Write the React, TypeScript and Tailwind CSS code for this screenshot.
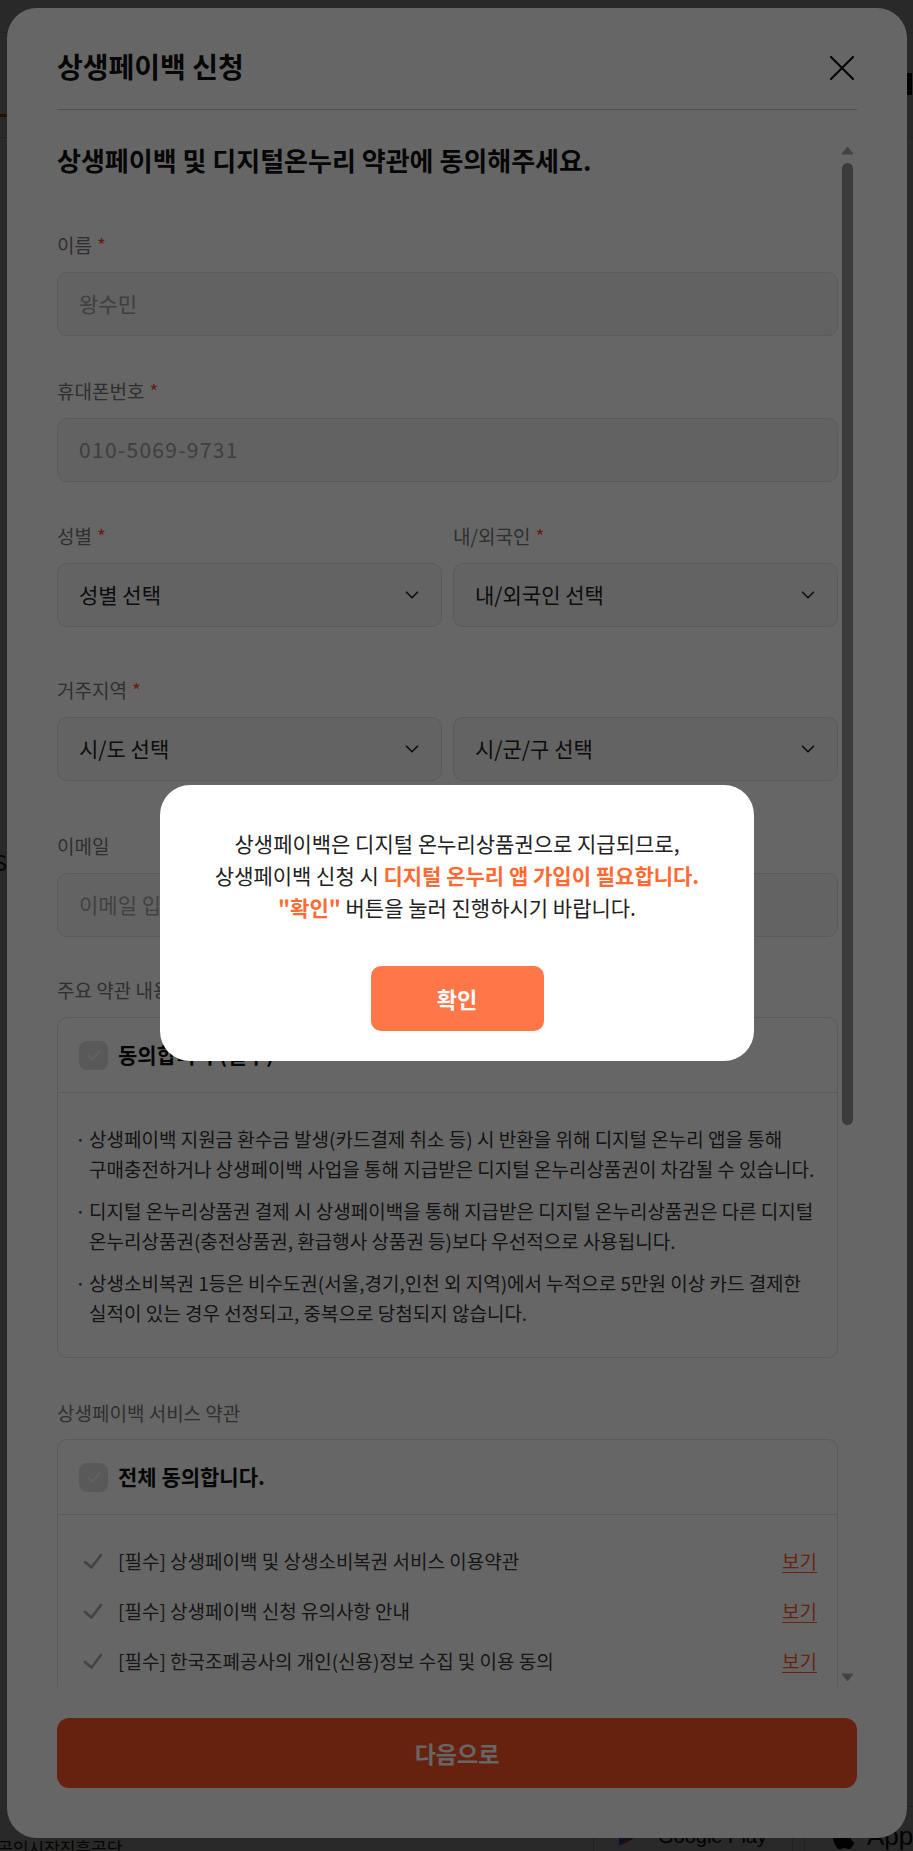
import React from "react";

/* ---------- small pieces ---------- */

function FieldLabel({ children, required }: { children: React.ReactNode; required?: boolean }) {
  return (
    <div className="text-[19px] leading-[26px] text-[#767676]">
      {children}
      {required && <span className="ml-[5px] text-[#ff4e1b]">*</span>}
    </div>
  );
}

function TextBox({ value, muted, className = "" }: { value: string; muted?: boolean; className?: string }) {
  return (
    <div
      className={`flex h-[64px] items-center rounded-[10px] border border-[#e1e1e1] pl-[21px] text-[21px] ${
        muted ? "bg-[#f4f4f4] text-[#9d9d9d]" : "bg-[#f8f8f8] text-[#a3a3a3]"
      } ${className}`}
    >
      {value}
    </div>
  );
}

function SelectBox({ placeholder }: { placeholder: string }) {
  return (
    <div className="flex h-[64px] items-center justify-between rounded-[10px] border border-[#e1e1e1] bg-[#f8f8f8] pl-[21px] pr-[18px] text-[21px] text-[#222]">
      <span>{placeholder}</span>
      <svg width="22" height="22" viewBox="0 0 24 24" fill="none" stroke="#222" strokeWidth="1.8" strokeLinecap="round" strokeLinejoin="round">
        <path d="m6 9 6 6 6-6" />
      </svg>
    </div>
  );
}

function CheckBox() {
  return (
    <span className="flex h-[29px] w-[29px] items-center justify-center rounded-[8px] bg-[#dedede]">
      <svg width="18" height="18" viewBox="0 0 18 18" fill="none" stroke="#efefef" strokeWidth="2" strokeLinecap="round" strokeLinejoin="round">
        <path d="M3.5 9.5 7.5 13.5 14.5 5" />
      </svg>
    </span>
  );
}

function TermRow({ text }: { text: string }) {
  return (
    <div className="flex h-[50px] items-center pl-[25px] pr-[20px]">
      <svg width="20" height="20" viewBox="0 0 20 20" fill="none" stroke="#a8a8a8" strokeWidth="2.6" strokeLinecap="round" strokeLinejoin="round">
        <path d="M2 11 8.5 16.5 18 4" />
      </svg>
      <span className="ml-[15px] flex-1 text-[19px] text-[#3a3a3a] whitespace-nowrap">{text}</span>
      <a className="text-[19px] text-[#ff5a26] underline underline-offset-[3px]">보기</a>
    </div>
  );
}

function ScrollTrack() {
  return (
    <div className="ml-[2px] flex w-[15px] shrink-0 flex-col items-center pt-[6px] pb-[5px]">
      <svg width="13" height="9" viewBox="0 0 13 9">
        <path d="M6.5 1 12 8H1Z" fill="#a9a9a9" stroke="#a9a9a9" strokeLinejoin="round" />
      </svg>
      <div className="mt-[8px] h-[962px] w-[11px] rounded-full bg-[#939393]" />
      <div className="flex-1" />
      <svg width="13" height="9" viewBox="0 0 13 9">
        <path d="M1 1H12L6.5 8Z" fill="#a9a9a9" stroke="#a9a9a9" strokeLinejoin="round" />
      </svg>
    </div>
  );
}

const notices: React.ReactNode[] = [
  <>
    상생페이백 지원금 환수금 발생(카드결제 취소 등) 시 반환을 위해 디지털 온누리 앱을 통해
    <br />
    구매충전하거나 상생페이백 사업을 통해 지급받은 디지털 온누리상품권이 차감될 수 있습니다.
  </>,
  <>
    디지털 온누리상품권 결제 시 상생페이백을 통해 지급받은 디지털 온누리상품권은 다른 디지털
    <br />
    온누리상품권(충전상품권, 환급행사 상품권 등)보다 우선적으로 사용됩니다.
  </>,
  <>
    상생소비복권 1등은 비수도권(서울,경기,인천 외 지역)에서 누적으로 5만원 이상 카드 결제한
    <br />
    실적이 있는 경우 선정되고, 중복으로 당첨되지 않습니다.
  </>,
];

const serviceTerms = [
  "[필수] 상생페이백 및 상생소비복권 서비스 이용약관",
  "[필수] 상생페이백 신청 유의사항 안내",
  "[필수] 한국조폐공사의 개인(신용)정보 수집 및 이용 동의",
  "[필수] 개인(신용)정보 제3자 제공 동의",
  "[선택] 마케팅 정보 수신 동의",
];

/* ---------- page ---------- */

export default function App() {
  return (
    <div className="relative h-[1851px] w-full overflow-hidden bg-white font-['Noto_Sans_CJK_KR','Noto_Sans',sans-serif]">
      {/* page underneath the dialogs */}
      <div className="flex h-full flex-col">
        <div className="h-[33px] border-b border-[#dcdcdc]" />
        <div className="flex h-[105px] justify-between border-b border-[#dcdcdc]">
          <div className="mt-[40px] h-[44px] w-[60px] border-b-[3px] border-[#ff4f1f]" />
          <div className="mt-[40px] mr-[1px] h-[22px] w-[5px] bg-[#111]" />
        </div>
        <div className="mt-[708px] -ml-[6px] text-[22px] leading-[30px] text-[#222] whitespace-nowrap">Store</div>
        <div className="mt-auto flex h-[45px] items-start">
          <span className="-ml-[34px] mt-[32px] text-[17px] leading-[20px] text-[#222] whitespace-nowrap">소상공인시장진흥공단</span>
          <div className="ml-auto -mr-[91px] flex gap-[11px]">
            <div className="flex h-[60px] w-[200px] items-center gap-[20px] border border-[#ccc] pl-[24px]">
              <svg width="20" height="22" viewBox="0 0 20 22">
                <path d="M1 1 12 11 1 21Z" fill="#2b7de9" />
                <path d="M1 21 12 11 15 14Z" fill="#e63b3b" />
              </svg>
              <span className="font-['Liberation_Sans',sans-serif] text-[20px] text-[#111]">Google Play</span>
            </div>
            <div className="flex h-[60px] w-[200px] items-center gap-[12px] border border-[#ccc] pl-[26px]">
              <svg width="24" height="28" viewBox="0 0 24 28" fill="#111">
                <path d="M19.6 14.9c0-3.3 2.7-4.9 2.8-5-1.5-2.2-3.900-2.500-4.700-2.600-2-.2-3.9 1.2-4.9 1.2s-2.6-1.2-4.3-1.1C6.3 7.4 4.2 8.7 3.1 10.7c-2.3 4-.6 10 1.7 13.2 1.1 1.6 2.4 3.4 4.1 3.300 1.700-.1 2.300-1.100 4.300-1.100s2.600 1.100 4.300 1c1.800 0 2.900-1.600 4-3.200 1.300-1.800 1.800-3.600 1.800-3.700 0 0-3.700-1.400-3.700-5.300ZM16.400 5.300c.9-1.100 1.500-2.600 1.300-4.100-1.300.1-2.900.9-3.800 2-.8.9-1.600 2.500-1.400 3.900 1.500.1 2.900-.7 3.900-1.800Z" />
              </svg>
              <span className="font-['Liberation_Sans',sans-serif] text-[26px] text-[#111]">App Store</span>
            </div>
          </div>
        </div>
      </div>

      {/* backdrop of the apply modal */}
      <div className="absolute inset-0 bg-black/60" />

      {/* apply modal */}
      <div className="absolute left-[7px] top-[8px] flex h-[1830px] w-[900px] flex-col rounded-[30px] bg-white px-[50px] pb-[50px]">
        <div className="flex items-center justify-between border-b border-[#c8c8c8] pt-[40px] pb-[25px]">
          <h1 className="text-[28px] leading-[36px] font-bold text-[#111]">상생페이백 신청</h1>
          <button className="mt-[4px] mr-[3px]">
            <svg width="24" height="24" viewBox="0 0 24 24" stroke="#111" strokeWidth="2.2" strokeLinecap="round">
              <path d="M1 1 23 23M23 1 1 23" />
            </svg>
          </button>
        </div>

        <div className="mt-[30px] flex min-h-0 flex-1">
          <div className="w-[781px] shrink-0 overflow-hidden">
            <h2 className="text-[26px] leading-[40px] font-bold text-[#111]">상생페이백 및 디지털온누리 약관에 동의해주세요.</h2>

            <div className="mt-[52px]">
              <FieldLabel required>이름</FieldLabel>
              <div className="mt-[14px]">
                <TextBox value="왕수민" muted />
              </div>
            </div>

            <div className="mt-[42px]">
              <FieldLabel required>휴대폰번호</FieldLabel>
              <div className="mt-[14px]">
                <TextBox value="010-5069-9731" muted className="tracking-[1.3px]" />
              </div>
            </div>

            <div className="mt-[41px] grid grid-cols-2 gap-x-[11px]">
              <FieldLabel required>성별</FieldLabel>
              <FieldLabel required>내/외국인</FieldLabel>
              <div className="mt-[14px]">
                <SelectBox placeholder="성별 선택" />
              </div>
              <div className="mt-[14px]">
                <SelectBox placeholder="내/외국인 선택" />
              </div>
            </div>

            <div className="mt-[50px]">
              <FieldLabel required>거주지역</FieldLabel>
              <div className="mt-[14px] grid grid-cols-2 gap-x-[11px]">
                <SelectBox placeholder="시/도 선택" />
                <SelectBox placeholder="시/군/구 선택" />
              </div>
            </div>

            <div className="mt-[52px]">
              <FieldLabel>이메일</FieldLabel>
              <div className="mt-[14px]">
                <TextBox value="이메일 입력" />
              </div>
            </div>

            <div className="mt-[40px]">
              <FieldLabel>주요 약관 내용</FieldLabel>
              <div className="mt-[14px] rounded-[10px] border border-[#e1e1e1]">
                <div className="flex h-[75px] items-center gap-[10px] border-b border-[#e1e1e1] pl-[21px]">
                  <CheckBox />
                  <span className="text-[21px] font-bold text-[#111]">동의합니다 (필수)</span>
                </div>
                <ul className="flex flex-col gap-[12px] pt-[31px] pb-[29px] pl-[21px] pr-[8px]">
                  {notices.map((n, i) => (
                    <li key={i} className="flex text-[19px] leading-[30px] text-[#333] whitespace-nowrap">
                      <span className="-ml-[4px] w-[14px] shrink-0">·</span>
                      <span>{n}</span>
                    </li>
                  ))}
                </ul>
              </div>
            </div>

            <div className="mt-[42px]">
              <FieldLabel>상생페이백 서비스 약관</FieldLabel>
              <div className="mt-[13px] rounded-[10px] border border-[#e1e1e1]">
                <div className="flex h-[75px] items-center gap-[10px] border-b border-[#e1e1e1] pl-[21px]">
                  <CheckBox />
                  <span className="text-[21px] font-bold text-[#111]">전체 동의합니다.</span>
                </div>
                <div className="pt-[21px] pb-[20px]">
                  {serviceTerms.map((t) => (
                    <TermRow key={t} text={t} />
                  ))}
                </div>
              </div>
            </div>
          </div>
          <ScrollTrack />
        </div>

        <button className="mt-[31px] h-[70px] w-full shrink-0 rounded-[12px] bg-[#ff5526] text-[23px] font-bold text-white">
          다음으로
        </button>
      </div>

      {/* backdrop of the alert */}
      <div className="absolute inset-0 bg-black/60" />

      {/* alert */}
      <div className="absolute left-[160px] top-[785px] flex w-[594px] flex-col items-center rounded-[30px] bg-white pt-[42px] pb-[30px] text-center">
        <p className="text-[21px] leading-[32px] text-[#222] whitespace-nowrap">
          상생페이백은 디지털 온누리상품권으로 지급되므로,
          <br />
          상생페이백 신청 시 <b className="text-[#ff6a33]">디지털 온누리 앱 가입이 필요합니다.</b>
          <br />
          <b className="text-[#ff6a33]">"확인"</b> 버튼을 눌러 진행하시기 바랍니다.
        </p>
        <button className="mt-[43px] h-[65px] w-[173px] rounded-[10px] bg-[#ff7649] text-[22px] font-bold text-white">확인</button>
      </div>
    </div>
  );
}
